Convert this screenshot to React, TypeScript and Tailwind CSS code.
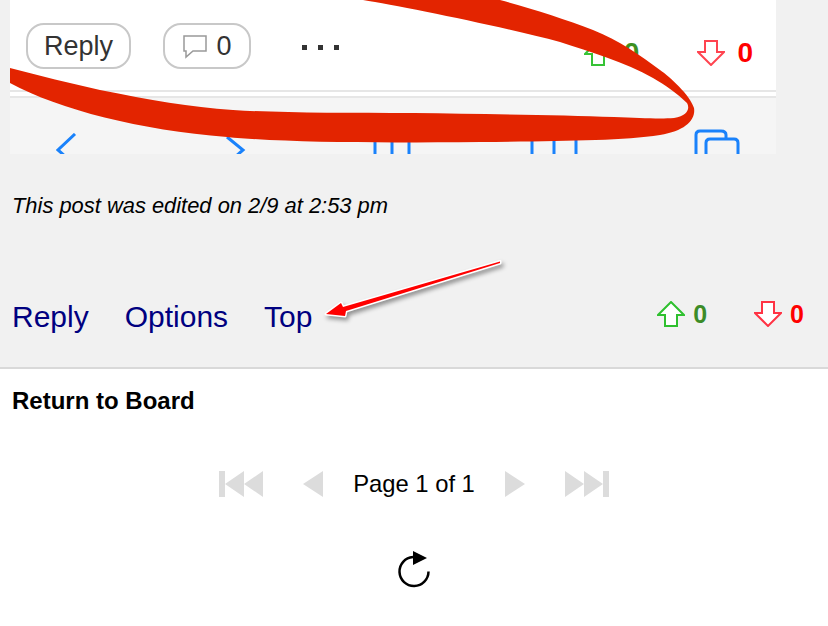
const sans = "font-['Liberation_Sans',Arial,sans-serif]";

function Triangle({ dir, w = 20 }: { dir: "left" | "right"; w?: number }) {
  return (
    <svg width={w} height="26" viewBox="0 0 20 26" preserveAspectRatio="none" className="block shrink-0">
      <path d={dir === "left" ? "M20 0V26L0 13Z" : "M0 0V26L20 13Z"} fill="#dcdcdc" />
    </svg>
  );
}

function Bar() {
  return <div className="w-[6px] h-[26px] bg-[#dcdcdc] shrink-0" />;
}

function VoteArrow({ up, stroke }: { up?: boolean; stroke: string }) {
  return (
    <svg width="28" height="26" viewBox="0 0 28 26" className="block shrink-0">
      <path
        d={up ? "M14 1L27 14H20V25H8V14H1Z" : "M8 1H20V12H27L14 25L1 12H8Z"}
        fill="#fff"
        stroke={stroke}
        strokeWidth="2"
      />
    </svg>
  );
}

function Pager() {
  return (
    <div className="flex items-center justify-center mt-[54px] h-[28px]">
      <Bar />
      <Triangle dir="left" w={19} />
      <Triangle dir="left" w={19} />
      <div className="w-[40px]" />
      <Triangle dir="left" />
      <span className="text-[23.8px] leading-[28px] text-black mx-[30px]">Page 1 of 1</span>
      <Triangle dir="right" />
      <div className="w-[40px]" />
      <Triangle dir="right" w={19} />
      <Triangle dir="right" w={19} />
      <Bar />
    </div>
  );
}

function Toolbar() {
  // phone toolbar, cut off at the bottom of the screenshot
  return (
    <div className="h-[56px] bg-[#f5f5f5] overflow-hidden relative flex items-start pt-[35px]">
      <svg width="22" height="24" viewBox="0 0 22 24" fill="none" stroke="#1a82fb" strokeWidth="3" className="ml-[46px] shrink-0">
        <path d="M19 1L2 17L10 24" />
      </svg>
      <svg width="22" height="24" viewBox="0 0 22 24" fill="none" stroke="#1a82fb" strokeWidth="3" className="ml-[148px] shrink-0">
        <path d="M1 4L17 17L9 24" />
      </svg>
      <svg width="40" height="24" viewBox="0 0 40 24" fill="none" stroke="#1a82fb" strokeWidth="3" className="ml-[125px] shrink-0">
        <path d="M2 6V24M19 6V24M36 6V24" />
      </svg>
      <svg width="48" height="24" viewBox="0 0 48 24" fill="none" stroke="#1a82fb" strokeWidth="3" className="ml-[117px] shrink-0">
        <path d="M2 6V24M24 6V24M46 6V24" />
      </svg>
      <svg width="46" height="28" viewBox="0 0 46 28" fill="none" stroke="#1a82fb" strokeWidth="3" className="ml-[116px] -mt-[4px] shrink-0">
        <path d="M2 28V6Q2 2 6 2H27Q32 2 32 6V10M12 28V14Q12 10 16 10H40Q44 10 44 14V28" />
      </svg>
    </div>
  );
}

export default function App() {
  return (
    <div className={`${sans} w-[828px] h-[626px] bg-white overflow-hidden relative`}>
      <div className="h-[369px] bg-[#f1f1f1] border-b-2 border-[#d9d9d9] flex flex-col">
        <div className="ml-[10px] w-[766px] bg-white">
          <div className="h-[90px] flex items-start pt-[23px] pl-[16px] relative">
            <div className="h-[46px] w-[105px] border-2 border-[#c8c8c8] rounded-[18px] flex items-center justify-center text-[27px] text-[#333] shrink-0">
              Reply
            </div>
            <div className="ml-[32px] h-[46px] w-[88px] border-2 border-[#c8c8c8] rounded-[18px] flex items-center justify-center gap-[8px] text-[27px] text-[#333] shrink-0">
              <svg width="26" height="26" viewBox="0 0 26 26" fill="none" stroke="#999" strokeWidth="1.5">
                <path d="M2 3H24V18H11L4 24V18H2Z" fill="#fff" />
              </svg>
              <span>0</span>
            </div>
            <div className="ml-[51px] mt-[22px] flex gap-[11px]">
              <div className="w-[5px] h-[5px] bg-[#333]" />
              <div className="w-[5px] h-[5px] bg-[#333]" />
              <div className="w-[5px] h-[5px] bg-[#333]" />
            </div>
            <div className="ml-auto mr-[23px] mt-[17px] flex items-center">
              <VoteArrow up stroke="#36c336" />
              <span className="ml-[12px] text-[28px] leading-[26px] font-bold text-[#3d9020]">0</span>
              <div className="w-[58px]" />
              <VoteArrow stroke="#ff4450" />
              <span className="ml-[12px] text-[28px] leading-[26px] font-bold text-[#ff0000]">0</span>
            </div>
          </div>
          <div className="h-[8px] border-t-2 border-b-2 border-[#e6e6e6] bg-white" />
          <Toolbar />
        </div>

        <div className="mt-[38px] ml-[12px] text-[21.9px] leading-[28px] italic text-black">
          This post was edited on 2/9 at 2:53 pm
        </div>

        <div className="mt-[78px] px-[12px] flex items-center h-[38px]">
          <a className="text-[30px] leading-[38px] text-[#000080]">Reply</a>
          <a className="ml-[36px] text-[30px] leading-[38px] text-[#000080]">Options</a>
          <a className="ml-[36px] text-[30px] leading-[38px] text-[#000080]">Top</a>
          <div className="ml-auto mr-[12px] -mt-[6px] flex items-center">
            <VoteArrow up stroke="#2fc02f" />
            <span className="ml-[8px] text-[25px] leading-[26px] font-bold text-[#3c8c28]">0</span>
            <div className="w-[47px]" />
            <VoteArrow stroke="#ff3344" />
            <span className="ml-[8px] text-[25px] leading-[26px] font-bold text-[#ff0000]">0</span>
          </div>
        </div>
      </div>

      <div className="pl-[12px] mt-[17px] text-[24px] leading-[30px] font-bold text-black">Return to Board</div>

      <Pager />

      <div className="flex justify-center mt-[51px]">
        <svg width="40" height="42" viewBox="0 0 40 42" fill="none" className="block">
          <path d="M34.5 22.5A14.5 14.5 0 1 1 19 8" stroke="#000" strokeWidth="2.5" />
          <path d="M19 2L33 9L19 16Z" fill="#000" />
        </svg>
      </div>

      {/* red marker scribble over the embedded screenshot */}
      <svg width="828" height="160" viewBox="0 0 828 160" className="absolute left-0 top-0 pointer-events-none">
        <path
          d="M10 83C60 110 140 130 227 137C290 143 380 143 480 142C560 141 620 141 660 135C685 131 696 120 694 108C690 95 670 77 660 70C640 55 620 41 593 30C565 19 530 8 500 0L363 0C400 6 500 26 560 42C590 52 625 62 653 78C665 85 678 94 687 103C690 108 688 116 674 118C660 119 640 118 614 117C560 115 480 114 414 113C340 113 280 113 233 110C190 107 150 100 100 90C70 83 40 76 10 68Z"
          fill="#e32400"
        />
      </svg>

      {/* annotation arrow pointing at Top */}
      <svg width="200" height="70" viewBox="0 0 200 70" className="absolute left-[315px] top-[255px] pointer-events-none drop-shadow-[2px_3px_2px_rgba(0,0,0,0.4)]">
        <path
          d="M11 59L26 48L28 52L185 6.5V8L31 56L30 61Z"
          fill="#ff0000"
          stroke="#fff"
          strokeWidth="3"
          strokeLinejoin="round"
          paintOrder="stroke"
        />
      </svg>
    </div>
  );
}
